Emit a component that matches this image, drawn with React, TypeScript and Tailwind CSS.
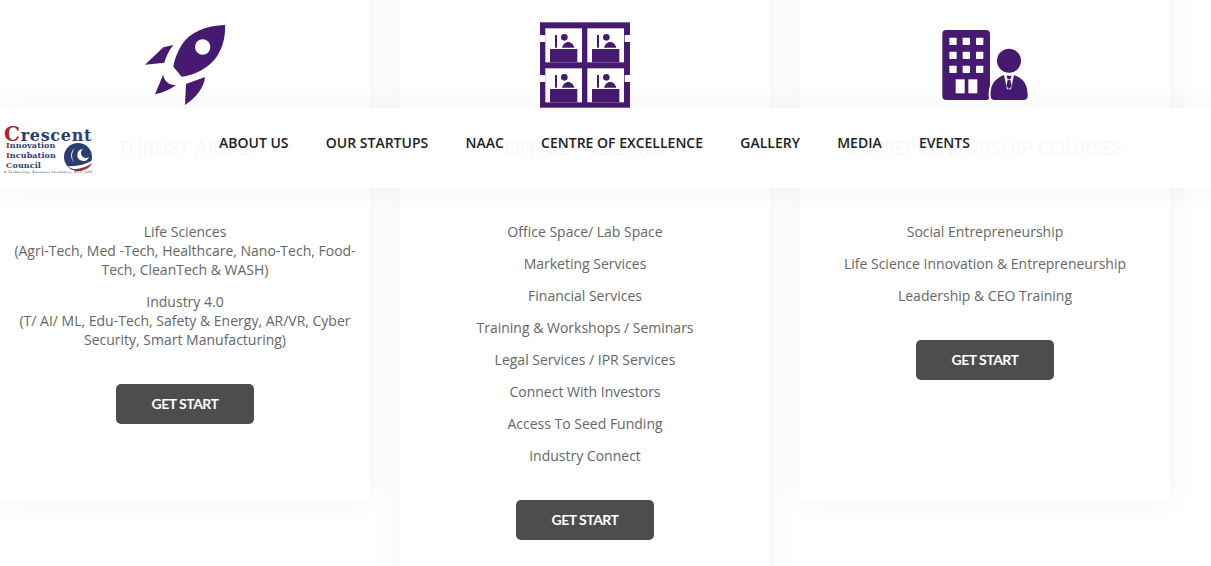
const PURPLE = "#451a70";

function Rocket() {
  return (
    <svg width="110" height="95" viewBox="0 0 330 285" fill={PURPLE}>
      <path d="M285 30 C230 32 180 50 155 90 C140 115 132 140 130 155 L155 185 C190 182 235 160 260 125 C280 95 287 60 285 30 Z" />
      <circle cx="218" cy="96" r="23" fill="#fff" />
      <path d="M45 149 L100 97 L130 90 C115 108 108 126 103 143 Z" />
      <path d="M75 238 L100 178 C100 195 115 212 137 210 C120 225 100 232 75 238 Z" />
      <path d="M165 270 L168 207 L225 186 C222 220 195 250 165 270 Z" />
    </svg>
  );
}

function OfficePanel({ x, y }: { x: number; y: number }) {
  return (
    <g transform={`translate(${x} ${y})`}>
      <rect x="0" y="0" width="110" height="102" fill="#fff" />
      <rect x="29" y="20" width="6" height="38" />
      <circle cx="57" cy="27" r="10" />
      <path d="M50 58 C53 46 62 39 71 41 C79 43 85 50 87 58 Z" />
      <rect x="14" y="62" width="82" height="40" />
    </g>
  );
}

function Offices() {
  return (
    <svg width="110" height="95" viewBox="0 0 330 285" fill={PURPLE}>
      <rect x="30" y="22" width="270" height="256" />
      <OfficePanel x={46} y={40} />
      <OfficePanel x={172} y={40} />
      <OfficePanel x={46} y={160} />
      <OfficePanel x={172} y={160} />
      <rect x="30" y="60" width="16" height="21" fill="#fff" />
      <rect x="284" y="60" width="16" height="21" fill="#fff" />
      <rect x="30" y="180" width="16" height="21" fill="#fff" />
      <rect x="284" y="180" width="16" height="21" fill="#fff" />
    </svg>
  );
}

function BuildingPerson() {
  const windows = [58, 98, 138].flatMap((x) => [53, 95, 137].map((y) => [x, y]));
  return (
    <svg width="110" height="95" viewBox="0 -15 330 285" fill={PURPLE}>
      <rect x="37" y="30" width="143" height="210" rx="12" />
      {windows.map(([x, y]) => (
        <rect key={`${x}-${y}`} x={x} y={y} width="22" height="22" rx="2" fill="#fff" />
      ))}
      <rect x="77" y="178" width="27" height="42" fill="#fff" />
      <rect x="115" y="178" width="27" height="42" fill="#fff" />
      <path
        d="M182 228 C180 192 196 176 222 165 L252 165 C280 176 293 192 293 228 C293 236 288 240 280 240 L194 240 C186 240 182 236 182 228 Z"
        stroke="#fff"
        strokeWidth="12"
        paintOrder="stroke"
      />
      <circle cx="237" cy="122" r="36" />
      <path d="M222 165 L252 165 L243 208 L231 208 Z" fill="#fff" />
      <path d="M229 167 L245 167 L241 178 L233 178 Z" />
      <path d="M233 180 L241 180 L245 198 L237 208 L229 198 Z" />
    </svg>
  );
}

function GetStart() {
  return (
    <button className="mt-[22px] flex h-10 w-[138px] items-center justify-center self-center rounded-[5px] bg-[#4d4d4d] font-['Lato',sans-serif] text-sm font-bold tracking-[-0.5px] text-white">
      GET START
    </button>
  );
}

function Card({
  icon,
  title,
  children,
}: {
  icon: React.ReactNode;
  title: string;
  children: React.ReactNode;
}) {
  return (
    <div className="flex min-h-[520px] flex-col bg-white px-3.5 pb-[60px] pt-[35px] shadow-[0_0_30px_rgba(0,0,0,0.05)]">
      <div className="flex h-[95px] justify-center">{icon}</div>
      <h3 className="mb-[60px] mt-[23px] text-center text-[19.3px] font-normal leading-[29px] text-[#451a70]">{title}</h3>
      {children}
    </div>
  );
}

function Lines({ items }: { items: React.ReactNode[] }) {
  return (
    <>
      {items.map((t, i) => (
        <p key={i} className="mb-[13px] text-center text-sm leading-[19px] text-[#666]">
          {t}
        </p>
      ))}
    </>
  );
}

function Logo() {
  return (
    <div className="relative h-[52px] w-[94px] font-['DejaVu_Serif',serif] font-bold text-[#2c3e6e]">
      <div className="absolute left-[4px] top-0 whitespace-nowrap text-[16px] leading-[18px] tracking-[0.7px]">
        <span className="text-[20px] text-[#a32a2e]">C</span>rescent
      </div>
      <div className="absolute left-[6px] top-[15px] whitespace-nowrap text-[8px] leading-[10px] tracking-[0.1px]">
        <div><span className="text-[#a32a2e]">I</span>nnovation</div>
        <div><span className="text-[#a32a2e]">I</span>ncubation</div>
        <div><span className="text-[#a32a2e]">C</span>ouncil</div>
      </div>
      <svg className="absolute left-[63px] top-[17px]" width="30" height="30" viewBox="0 0 30 30">
        <circle cx="15" cy="15" r="14" fill="#2c3e6e" />
        <path d="M12 6 A9 9 0 0 0 11 20 A11 11 0 0 1 12 6 Z" fill="#fff" />
        <path d="M20 7 A6 6 0 1 0 26 15 A5 5 0 1 1 20 7 Z" fill="#fff" />
        <path d="M4 24 C12 25 22 23 30 18 L30 22 C26 28 14 31 4 24 Z" fill="#fff" />
        <path d="M7 27 C14 28 24 25 29 21 C27 27 18 31 7 27 Z" fill="#a32a2e" />
      </svg>
      <div className="absolute left-[4px] top-[45px] whitespace-nowrap text-[3px] font-normal leading-[5px] tracking-[0.55px] text-[#111]">
        A Technology Business Incubator, DST, GOI
      </div>
    </div>
  );
}

const NAV = ["ABOUT US", "OUR STARTUPS", "NAAC", "CENTRE OF EXCELLENCE", "GALLERY", "MEDIA", "EVENTS"];

export default function App() {
  return (
    <div className="relative h-[566px] w-[1211px] overflow-hidden bg-white font-['Open_Sans',sans-serif]">
      <div className="-mt-[20px] grid w-[1170px] grid-cols-3 items-start gap-[30px]">
        <Card icon={<Rocket />} title="THRUST AREAS">
          <Lines
            items={[
              <>Life Sciences<br />(Agri-Tech, Med -Tech, Healthcare, Nano-Tech, Food-Tech, CleanTech &amp; WASH)</>,
              <>Industry 4.0<br />(T/ AI/ ML, Edu-Tech, Safety &amp; Energy, AR/VR, Cyber Security, Smart Manufacturing)</>,
            ]}
          />
          <GetStart />
        </Card>
        <Card icon={<Offices />} title="OFFICE FACILITIES">
          <Lines
            items={[
              "Office Space/ Lab Space",
              "Marketing Services",
              "Financial Services",
              "Training & Workshops / Seminars",
              "Legal Services / IPR Services",
              "Connect With Investors",
              "Access To Seed Funding",
              "Industry Connect",
            ]}
          />
          <GetStart />
        </Card>
        <Card icon={<BuildingPerson />} title="ENTREPRENEURSHIP COURSES">
          <Lines
            items={[
              "Social Entrepreneurship",
              "Life Science Innovation & Entrepreneurship",
              "Leadership & CEO Training",
            ]}
          />
          <GetStart />
        </Card>
      </div>
      <nav className="absolute left-0 top-[108px] flex h-20 w-full items-center bg-white/[0.96] shadow-[0_0_30px_rgba(0,0,0,0.05)]">
        <div className="mt-[6px] w-[219px] shrink-0">
          <Logo />
        </div>
        <ul className="-mt-[10px] flex gap-[37.25px] text-sm font-semibold text-[#222]">
          {NAV.map((n) => (
            <li key={n}>{n}</li>
          ))}
        </ul>
      </nav>
    </div>
  );
}
